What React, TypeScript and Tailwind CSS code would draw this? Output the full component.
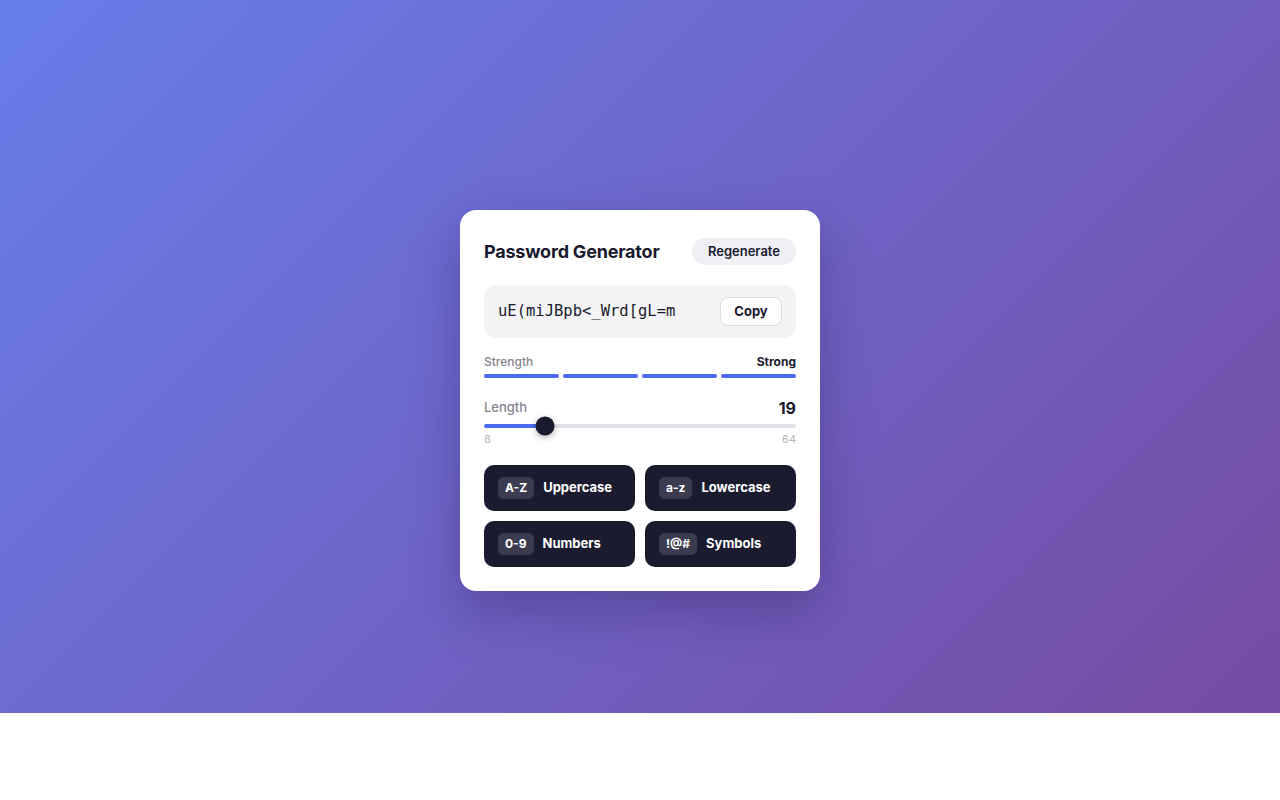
import React from "react"

const toggles = [
  { badge: "A-Z", label: "Uppercase" },
  { badge: "a-z", label: "Lowercase" },
  { badge: "0-9", label: "Numbers" },
  { badge: "!@#", label: "Symbols" },
]

export default function App() {
  const length = 19
  const pct = ((length - 8) / (64 - 8)) * 100

  return (
    <div className="min-h-[800px] bg-white" style={{ fontFamily: "Inter, 'Noto Sans', sans-serif" }}>
      <div className="flex h-[713px] items-start justify-center bg-[linear-gradient(135deg,#667eea_0%,#764ba2_100%)] pt-[210px]">
        <div className="w-[360px] rounded-2xl bg-white px-6 pb-6 pt-7 shadow-[0_20px_50px_rgba(40,30,90,0.35)]">
          {/* header */}
          <div className="flex h-[27px] items-center justify-between">
            <h1 className="text-[18px] font-bold tracking-[-0.2px] text-[#1a1a2e]">Password Generator</h1>
            <button className="h-[27px] rounded-full bg-[#efeff4] px-4 text-[13px] font-semibold text-[#1a1a2e]">
              Regenerate
            </button>
          </div>

          {/* password */}
          <div className="mt-5 flex h-[53px] items-center justify-between rounded-xl bg-[#f4f4f6] pl-[14px] pr-[14px]">
            <span
              className="text-[15.5px] text-[#1a1a2e]"
              style={{ fontFamily: "'DejaVu Sans Mono', 'Liberation Mono', monospace" }}
            >
              uE(miJBpb&lt;_Wrd[gL=m
            </span>
            <button className="h-[29px] w-[62px] rounded-lg border border-[#dcdce2] bg-white text-[13px] font-bold text-[#1a1a2e]">
              Copy
            </button>
          </div>

          {/* strength */}
          <div className="mt-4 flex items-center justify-between text-[12px] leading-4">
            <span className="font-medium text-[#858590]">Strength</span>
            <span className="font-bold text-[#1a1a2e]">Strong</span>
          </div>
          <div className="mt-1 grid grid-cols-4 gap-1">
            <div className="h-1 rounded-full bg-[#4b6cf0]" />
            <div className="h-1 rounded-full bg-[#4b6cf0]" />
            <div className="h-1 rounded-full bg-[#4b6cf0]" />
            <div className="h-1 rounded-full bg-[#4b6cf0]" />
          </div>

          {/* length */}
          <div className="mt-[18px] flex h-6 items-center justify-between">
            <span className="text-[13px] font-medium text-[#858590]">Length</span>
            <span className="text-[16px] font-bold text-[#1a1a2e]">{length}</span>
          </div>
          <div className="relative flex h-3 items-center">
            <div className="h-1 w-full rounded-full bg-[#e2e2e8]">
              <div className="h-1 rounded-full bg-[#4b6cf0]" style={{ width: `${pct}%` }} />
            </div>
            <div
              className="absolute top-1/2 h-[19px] w-[19px] -translate-x-1/2 -translate-y-1/2 rounded-full bg-[#1a1a2e] shadow-[0_2px_6px_rgba(0,0,0,0.3)]"
              style={{ left: `${pct}%` }}
            />
          </div>
          <div className="flex justify-between text-[11px] leading-[14px] text-[#b4b4bc]">
            <span>8</span>
            <span>64</span>
          </div>

          {/* toggles */}
          <div className="mt-[19px] grid grid-cols-2 gap-[10px]">
            {toggles.map((t) => (
              <button
                key={t.label}
                className="flex h-[46px] items-center gap-[9px] rounded-[10px] bg-[#1b1b2f] px-[14px] text-left"
              >
                <span className="flex h-[22px] items-center rounded-md bg-[#3c3c50] px-[7px] text-[12px] font-bold text-white">
                  {t.badge}
                </span>
                <span className="text-[13px] font-bold text-white">{t.label}</span>
              </button>
            ))}
          </div>
        </div>
      </div>
    </div>
  )
}
